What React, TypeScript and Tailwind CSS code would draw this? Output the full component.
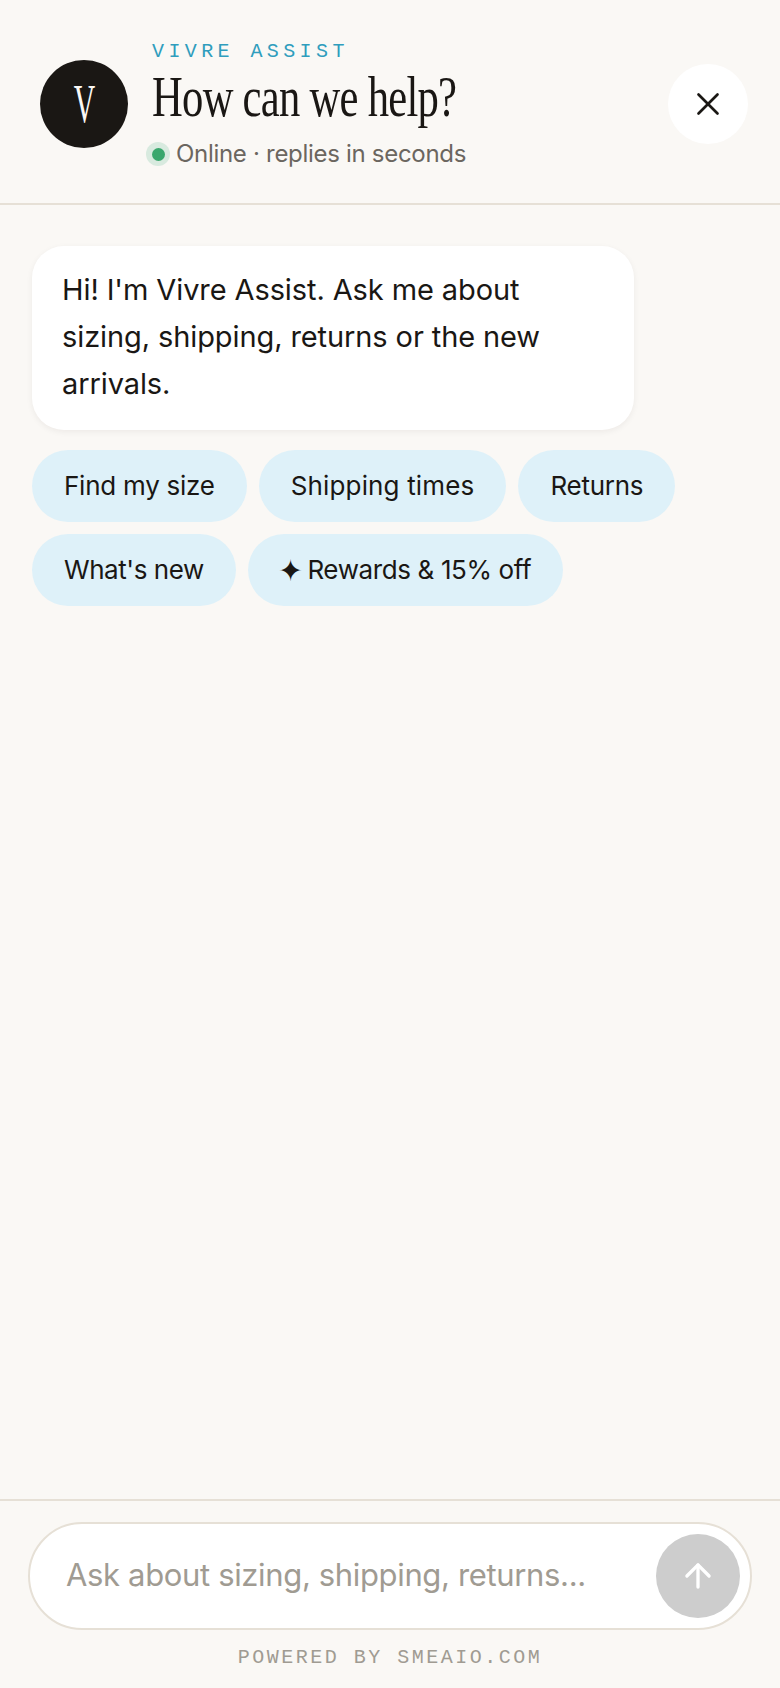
import React from 'react';
import { ArrowUp, X } from 'lucide-react';

const sans = "font-['Inter','Noto_Sans',sans-serif]";
const chips = [
  [
    { label: 'Find my size', fit: 'tracking-[-0.25px]' },
    { label: 'Shipping times', fit: 'tracking-[0.15px]' },
    { label: 'Returns', fit: 'tracking-[-0.25px]' },
  ],
  [
    { label: "What's new", fit: 'tracking-[-0.45px]' },
    { label: 'Rewards & 15% off', fit: 'tracking-[-0.38px]', star: true },
  ],
];

const App = () => {
  return (
    <div className={`flex h-[1688px] w-[780px] flex-col overflow-hidden bg-[#faf8f5] text-[#1a1714] ${sans}`}>
      <header className="flex h-[205px] shrink-0 items-start justify-between border-b-2 border-[#e6e0d6] pl-10 pr-8">
        <div className="flex items-start">
          <div className="mt-[60px] flex h-[88px] w-[88px] items-center justify-center rounded-full bg-[#1a1714] font-['Liberation_Serif',serif] text-[54px] leading-none text-[#faf8f5]">
            <span className="inline-block scale-x-[0.55]">V</span>
          </div>
          <div className="ml-6 pt-10">
            <div className="font-['Liberation_Mono',monospace] text-[20px] leading-[24px] tracking-[4.4px] text-[#2f9dbd]">
              VIVRE ASSIST
            </div>
            <h1 className="mt-[1px] origin-left scale-x-[0.735] whitespace-nowrap font-['Liberation_Serif',serif] text-[58px] leading-[64px] tracking-[-1px]">
              How can we help?
            </h1>
            <div className="mt-2 flex items-center text-[24px] leading-[34px] tracking-[-0.3px] text-[#6b665f]">
              <span className="-ml-[6px] mr-[6px] flex h-6 w-6 items-center justify-center rounded-full bg-[#d8eadf]">
                <span className="h-[13px] w-[13px] rounded-full bg-[#3aa76d]" />
              </span>
              Online · replies in seconds
            </div>
          </div>
        </div>
        <button className="mt-16 flex h-20 w-20 items-center justify-center rounded-full bg-white">
          <X size={38} strokeWidth={1.7} />
        </button>
      </header>

      <main className="flex flex-1 flex-col items-start px-8 pt-[41px]">
        <div className="w-[602px] rounded-[32px] bg-white px-[30px] pb-[23px] pt-5 text-[29px] leading-[47px] tracking-[-0.1px] shadow-[0_2px_6px_rgba(26,23,20,0.06)]">
          Hi! I'm Vivre Assist. Ask me about sizing, shipping, returns or the new arrivals.
        </div>
        <div className="mt-5 flex flex-col gap-3">
          {chips.map((row) => (
            <div key={row[0].label} className="flex gap-3">
              {row.map((chip) => (
                <button key={chip.label} className={`flex h-[72px] items-center rounded-full bg-[#def1f9] px-8 text-[26px] leading-none ${chip.fit}`}>
                  {chip.star && <span className="-ml-[2px] mr-[5px] text-[30px] leading-none">✦</span>}
                  {chip.label}
                </button>
              ))}
            </div>
          ))}
        </div>
      </main>

      <footer className="h-[189px] shrink-0 border-t-2 border-[#e6e0d6] px-7 pt-[21px]">
        <div className="flex h-[108px] items-center justify-between rounded-full border-2 border-[#e6e0d6] bg-white pl-[36px] pr-[10px]">
          <span className="pb-[2px] text-[31px] tracking-[-0.35px] text-[#a09b92]">Ask about sizing, shipping, returns...</span>
          <button className="flex h-[84px] w-[84px] items-center justify-center rounded-full bg-[#cdcdcd] text-white">
            <ArrowUp size={38} strokeWidth={2.1} />
          </button>
        </div>
        <div className="mt-[16px] text-center font-['Liberation_Mono',monospace] text-[20px] leading-[24px] tracking-[2.5px] text-[#a09b92]">
          POWERED BY SMEAIO.COM
        </div>
      </footer>
    </div>
  );
};

export default App;
